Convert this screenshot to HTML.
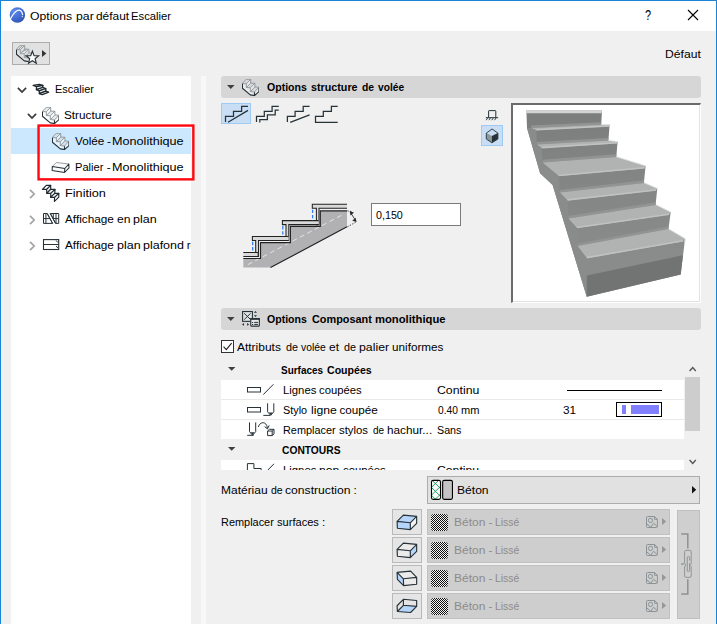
<!DOCTYPE html>
<html lang="fr"><head><meta charset="utf-8"><title>Options par défaut Escalier</title>
<style>
*{box-sizing:border-box;margin:0;padding:0}
html,body{width:717px;height:624px;overflow:hidden;background:#f0f0f0}
body{position:relative;font-family:"Liberation Sans",sans-serif;font-size:12px;color:#000}
.abs{position:absolute}
svg{position:absolute;overflow:visible}
.t{position:absolute;white-space:nowrap;line-height:14px;font-size:11.7px;transform-origin:0 0}
.b{font-weight:bold}
.t span{position:absolute;top:0;left:0;transform-origin:0 0;white-space:nowrap}
#frame{position:absolute;left:0;top:0;width:717px;height:625px;border:1px solid #1883d7;pointer-events:none;z-index:50}
#titlebar{position:absolute;left:1px;top:1px;width:715px;height:30px;background:#fff}
#tree{position:absolute;left:11px;top:76px;width:180px;height:548px;background:#fff;overflow:hidden}
#split{position:absolute;left:201px;top:76px;width:5px;height:548px;background:#f8f8f8}
.hdr{position:absolute;left:221px;width:480px;height:22px;background:#d6d6d6;border-radius:3px}
.sel{position:absolute;background:#c9def5;border:1px solid #9ecbf3}
.btn{position:absolute;background:#e1e1e1;border:1px solid #adadad}
.sbtn{position:absolute;left:392px;width:30px;height:26px;background:#e5e5e5;border:1px solid #b9b9b9}
.gbtn{position:absolute;left:427px;width:243px;height:26px;background:#cecece;border:1px solid #c1c1c1}
.chk{position:absolute;left:431px;width:17px;height:17px;border-radius:3px;background:#808080;
 background-image:repeating-conic-gradient(#111 0 25%,#f4f4f4 0 50%);background-size:2px 2px}
.row{position:absolute;left:0;width:464px;background:#fff}
.sep{position:absolute;left:0;width:464px;height:1px;background:#e9e9e9}
</style></head><body>
<svg width="0" height="0" style="display:none">
 <defs>
  <symbol id="st3d" viewBox="0 0 17 17">
   <path d="M0.2 4.6L4.2 0.3H8.7V4.1L12.9 4.25V7.9L16.85 8.25L17 12.6L12.5 16.6L8.3 15.85L0.2 9.3Z" fill="#ffffff" fill-opacity="0.55"/>
   <path d="M0.2 4.6L4.2 0.3H8.7L4.35 4.8Z M4.35 8.6L8.7 4.1L12.9 4.25L8.3 8.8Z M8.3 12.6L12.9 7.9L16.85 8.25L12.5 12.95Z" fill="#6f7b80" fill-opacity="0.16"/>
   <path d="M0.2 4.6L4.2 0.3H8.7V4.1L12.9 4.25V7.9L16.85 8.25 M0.2 4.6L4.35 4.8V8.6L8.3 8.8V12.6L12.5 12.95 M4.35 4.8L8.7 0.3 M4.35 8.6L8.7 4.1 M8.3 8.8L12.9 4.25 M8.3 12.6L12.9 7.9 M12.5 12.95L16.85 8.25" fill="none" stroke="#858d91" stroke-width="0.85"/>
   <path d="M0.45 4.7V9.3L8.3 15.85L12.5 16.6L17 12.6V8.8 M12.5 13.2V16.6" fill="none" stroke="#263238" stroke-width="1.15" stroke-linejoin="round"/>
  </symbol>
  <symbol id="st3dl" viewBox="0 0 17 17">
   <path d="M0.2 4.6L4.2 0.3H8.7V4.1L12.9 4.25V7.9L16.85 8.25 M0.2 4.6L4.35 4.8V8.6L8.3 8.8V12.6L12.5 12.95 M4.35 4.8L8.7 0.3 M4.35 8.6L8.7 4.1 M8.3 8.8L12.9 4.25 M8.3 12.6L12.9 7.9 M12.5 12.95L16.85 8.25 M2.3 4.7L6.4 0.4 M6.3 6.7L10.8 4.2" fill="none" stroke="#8f979a" stroke-width="0.9"/>
   <path d="M0.45 4.7V9.3L8.3 15.85L12.5 16.6" fill="none" stroke="#263238" stroke-width="1.15" stroke-linejoin="round"/>
  </symbol>
  <symbol id="chevd" viewBox="0 0 10 7"><path d="M0.9 0.9L5 5L9.1 0.9" fill="none" stroke="#3c3c3c" stroke-width="1.75"/></symbol>
  <symbol id="chevr" viewBox="0 0 7 10"><path d="M1 0.9L5.2 5L1 9.1" fill="none" stroke="#a3a3a3" stroke-width="1.7"/></symbol>
  <symbol id="pic" viewBox="0 0 12 12">
   <path d="M1.6 0.5H8.6L11.4 3.3V10.4Q11.4 11.5 10.3 11.5H1.6Q0.5 11.5 0.5 10.4V1.6Q0.5 0.5 1.6 0.5Z M8.6 0.5V3.3H11.4" fill="none" stroke="#8c9396" stroke-width="1"/>
   <circle cx="4.5" cy="4.4" r="2.1" fill="none" stroke="#8c9396" stroke-width="1"/>
   <path d="M0.5 7.7L4.8 11.2L7.6 7.3L11.4 10.6" fill="none" stroke="#8c9396" stroke-width="1"/>
  </symbol>
  <symbol id="pen" viewBox="0 0 11 13">
   <path d="M4.5 0.3V8.5L7.4 12L10.3 8.5V0.3" fill="none" stroke="#263238" stroke-width="1"/>
   <path d="M5.6 9.5H9.2L7.4 12Z" fill="#263238"/>
   <path d="M0.2 12H7" stroke="#263238" stroke-width="1" fill="none"/>
  </symbol>
 </defs>
</svg>

<div id="titlebar"></div>
<!-- app logo -->
<svg style="left:9px;top:7px" width="17" height="17" viewBox="9 7 17 17">
 <defs><radialGradient id="lg" cx="0.3" cy="0.25" r="0.9"><stop offset="0" stop-color="#5f8bec"/><stop offset="0.6" stop-color="#3f68cc"/><stop offset="1" stop-color="#2a4ea8"/></radialGradient></defs>
 <circle cx="17.4" cy="15.05" r="7.7" fill="url(#lg)"/>
 <path d="M10.3 19.3C12 16 14.5 12.2 17.3 10.6C19.8 9.2 22 11 22.6 14.6" fill="none" stroke="#fff" stroke-width="1.2" stroke-linecap="round"/>
 <path d="M21.5 16L23.2 16.2L22.3 17.6Z" fill="#fff"/>
</svg>
<div class="t" style="left:645.2px;top:8px;font-size:14px;top:8px;transform:scaleX(.78)">?</div>
<svg style="left:687px;top:9px" width="12" height="12"><path d="M1 1L11 11M11 1L1 11" stroke="#000" stroke-width="1.1" fill="none"/></svg>

<!-- favourites button -->
<div class="btn" style="left:12px;top:42px;width:38px;height:23px"></div>
<svg style="left:16px;top:45px" width="17" height="17"><use href="#st3dl"/></svg>
<svg style="left:25px;top:50px" width="15" height="15" viewBox="25 50 15 15">
 <path d="M32.4 51.2L34.1 55.6L38.6 55.8L35.1 58.7L36.3 63.2L32.4 60.7L28.5 63.2L29.7 58.7L26.2 55.8L30.7 55.6Z" fill="#fff" stroke="#263238" stroke-width="1.15" stroke-linejoin="miter"/>
</svg>
<svg style="left:42px;top:50px" width="5" height="7"><path d="M0 0L4.3 3.5L0 7Z" fill="#333"/></svg>

<!-- tree -->
<div id="tree">
 <div class="abs" style="left:0;top:52px;width:180px;height:26px;background:#cce8ff"></div>
</div>
<svg style="left:17.1px;top:86.9px" width="10" height="7"><use href="#chevd"/></svg>
<svg style="left:27.1px;top:112.9px" width="10" height="7"><use href="#chevd"/></svg>
<svg style="left:29.1px;top:189.0px" width="7" height="10"><use href="#chevr"/></svg>
<svg style="left:29.1px;top:215.0px" width="7" height="10"><use href="#chevr"/></svg>
<svg style="left:29.1px;top:241.0px" width="7" height="10"><use href="#chevr"/></svg>
<!-- escalier icon -->
<svg style="left:32px;top:83px" width="18" height="13" viewBox="32 83 18 13">
 <g fill="#eef0f1" stroke="#1f2a30" stroke-width="1.25" stroke-linejoin="round">
  <path d="M33.1 85.4L39.4 84.4L42.9 85.4L36.5 86.7Z"/>
  <path d="M36.5 86.7L36.4 89.6L42.7 88.3L42.9 85.4Z"/>
  <path d="M36.4 89.6L39.3 90.9L45.8 88.5L42.7 87.3Z"/>
  <path d="M39.3 90.9V93.6L45.8 91.2V88.5Z"/>
  <path d="M39.3 93.6L42.3 94.7L48.7 92.2L45.8 91.2Z"/>
 </g>
</svg>
<svg style="left:42px;top:107px" width="17" height="17"><use href="#st3d"/></svg>
<svg style="left:52px;top:133px" width="17" height="17"><use href="#st3d"/></svg>
<!-- palier icon -->
<svg style="left:51px;top:161px" width="20" height="13" viewBox="51 161 20 13">
 <path d="M52.3 166.5L56.3 162.5L68.8 164L69 167.8L64.5 172.5L52.1 170.5Z" fill="#fafafa"/>
 <path d="M52.3 166.5L56.3 162.5L68.8 164" fill="none" stroke="#8d9599" stroke-width="0.9"/>
 <path d="M52.3 166.5L64.8 168.5L68.8 164L69 167.8L64.5 172.5L52.1 170.5Z M64.8 168.5L64.5 172.5" fill="none" stroke="#263238" stroke-width="1.05" stroke-linejoin="round"/>
</svg>
<!-- finition icon -->
<svg style="left:41px;top:184px" width="19" height="19" viewBox="41 184 19 19">
 <g fill="#fff" stroke="#1f2a30" stroke-width="1.15" stroke-linejoin="round">
  <path d="M42.4 189.3L46.3 185.4H50.7L46.7 189.3Z"/>
  <path d="M46.7 189.3L50.7 185.4V189.2L46.7 193.3Z"/>
  <path d="M46.7 193.3L50.7 189.3H55L50.8 193.3Z"/>
  <path d="M50.8 193.3L55 189.3L54.8 193.3L50.6 197.3Z"/>
  <path d="M50.6 197.3L54.8 193.4H58.8L54.6 197.3Z"/>
  <path d="M54.6 197.3L58.8 193.4V197.2L54.4 201.3Z"/>
 </g>
</svg>
<!-- plan icon -->
<svg style="left:43px;top:213px" width="17" height="11" viewBox="43 213 17 11">
 <path d="M43.5 213.5H47.2L52.6 223.4H43.5Z M50.3 213.5H58.7V223.4H55.6Z" fill="#fff" stroke="#263238" stroke-width="1"/>
 <path d="M43.5 218.6H50 M52.8 218.6H58.7 M45.9 213.5V223.4 M53.3 213.5V218.6 M56 213.5V223.4 M47.2 213.5L52.6 223.4 M50.3 213.5L55.6 223.4" fill="none" stroke="#263238" stroke-width="1"/>
</svg>
<!-- plafond icon -->
<svg style="left:43px;top:239px" width="17" height="11" viewBox="43 239 17 11">
 <rect x="43.5" y="239.6" width="15.2" height="9.9" fill="#fff" stroke="#263238" stroke-width="1.1"/>
 <path d="M43.5 244.5H58.7 M56.2 240.5L57.8 242.5 M56.2 246L57.8 248" fill="none" stroke="#263238" stroke-width="1"/>
</svg>
<svg style="left:36px;top:123px" width="160" height="59" viewBox="36 123 160 59"><rect x="38.55" y="125.55" width="154.8" height="53.8" fill="none" stroke="#fd0810" stroke-width="2.4"/></svg>
<div id="split"></div>

<!-- panel 1 -->
<div class="hdr" style="top:76px"></div>
<svg style="left:226.8px;top:85px" width="8" height="4"><path d="M0 0H7.6L3.8 3.9Z" fill="#404040"/></svg>
<svg style="left:242px;top:79px" width="17" height="17"><use href="#st3d"/></svg>
<div class="sel" style="left:221px;top:103px;width:30px;height:21px"></div>
<svg style="left:221px;top:103px" width="120" height="22" viewBox="221 103 120 22">
 <g fill="none" stroke="#263238" stroke-width="1.25">
  <path d="M225.5 122V116.4H233.5V111.3H241.6V106.4H248 M228 122.3L248 110.4"/>
  <path d="M256.5 122V116.4H264.3V111.3H272.1V106.4H278.8 M259.8 122.6V119.6H267.4V114.9H275.2V110H278.8"/>
  <path d="M287.4 122V116.4H295.1V111.3H303.2V106.4H309.6 M290.2 122.3L309.6 114.8"/>
  <path d="M337.7 122.3H315.5V116.4H323.3V111.3H331.4V106.4H337.7"/>
 </g>
</svg>
<!-- ground / cube icons -->
<svg style="left:485px;top:109px" width="14" height="12" viewBox="485 109 14 12">
 <path d="M488.6 117.6V111.1Q488.6 110.6 489.1 110.6H495.3Q495.8 110.6 495.8 111.1V117.6 M485.8 117.7H498.2" fill="none" stroke="#263238" stroke-width="1"/>
 <path d="M487.6 118L486.2 120.2 M490.4 118L489 120.2 M493.2 118L491.8 120.2 M496 118L494.6 120.2" fill="none" stroke="#263238" stroke-width="0.9"/>
</svg>
<div class="sel" style="left:481px;top:125px;width:22px;height:21px"></div>
<svg style="left:485px;top:128px" width="14" height="16" viewBox="485 128 14 16">
 <path d="M492.1 129L497.9 133.1L491.9 135.9L486.3 133.1Z" fill="#c5dcf0"/>
 <path d="M486.3 133.1L491.9 135.9V142.8L486.3 139Z" fill="#8c979c"/>
 <path d="M497.9 133.1L491.9 135.9V142.8L497.9 139Z" fill="#263238"/>
 <path d="M492.1 129L497.9 133.1V139L491.9 142.8L486.3 139V133.1Z" fill="none" stroke="#263238" stroke-width="0.9" stroke-linejoin="round"/>
</svg>
<!-- preview frame -->
<div class="abs" style="left:511px;top:103px;width:190px;height:200px;background:#fff;border-top:2px solid #6b6b6b;border-left:2px solid #6b6b6b;border-right:1px solid #fff;border-bottom:1px solid #fff;box-shadow:inset -1px -1px 0 #e3e3e3"></div>
<svg style="left:513px;top:105px" width="186" height="196" viewBox="513 105 186 196">
 <defs><linearGradient id="sg" gradientUnits="userSpaceOnUse" x1="0" y1="110" x2="0" y2="260"><stop offset="0" stop-color="#7b7d7c"/><stop offset="0.35" stop-color="#828483"/><stop offset="1" stop-color="#8a8c8b"/></linearGradient></defs>
 <path d="M526.4 110.5H602L601.2 124.8H609.6L608.4 140.7L617.6 141.7L616.3 156.8L645.6 166L643.9 182.7L657.3 188.6L655.6 204.6L670.7 212.2L668.5 228.8L685.1 238.8L680.7 274.5L586.7 296.7L552.6 185L540.1 173.3L527 128.1Z" fill="url(#sg)"/>
 <path d="M531.4 128.1L601.2 124.8L601.2 122.2L531.2 125.5ZM536.8 144.5L608.4 140.5L608.4 137.9L536.6 141.9ZM542.6 162.4L616.3 156.9L616.3 154.3L542.4 159.8ZM559.9 192.5L644.0 182.9L644.0 180.3L559.7 189.9ZM568.5 218.5L655.8 204.9L655.8 202.3L568.3 215.9ZM577.7 246.1L668.6 229.1L668.6 226.5L577.5 243.5Z" fill="#929493"/>
 <path d="M527 128.1L531.4 128.1L536.4 130.1L536.8 144.5L541.8 147.9L542.6 162.4L558.8 175.8L559.9 192.5L567.7 200.1L568.5 218.5L576.9 227.7L577.7 246.1L586.9 257.8L586.7 296.7L552.6 185L540.1 173.3Z" fill="#8a8c8b"/>
 <path d="M586.9 275.4L682.9 255.2L680.7 274.5L586.7 296.7Z" fill="#727473"/>
 <path d="M526.4 110.3H602L601.6 113.2H526.4Z" fill="#d3d5d5"/>
 <path d="M531.4 128.1L601.2 124.8L609.6 124.8L609.0 126.6L536.4 130.3ZM536.8 144.5L608.4 140.5L617.6 141.7L616.8 143.4L541.8 148.1ZM542.6 162.4L616.3 156.9L645.6 166.0L644.5 168.4L558.8 176.0ZM559.9 192.5L644.0 182.9L657.3 188.6L656.0 190.6L567.7 200.4ZM568.5 218.5L655.8 204.9L670.7 212.2L669.0 214.8L576.9 228.0ZM577.7 246.1L668.6 229.1L685.1 238.8L683.0 241.4L586.9 258.1Z" fill="#b0b3b2"/>
 <path d="M536.4 129.8L609.0 126.0M541.8 147.6L616.8 142.8M558.8 175.5L644.5 167.8M567.7 199.9L656.0 190.0M576.9 227.5L669.0 214.2M586.9 257.6L683.0 240.8" fill="none" stroke="#bfc2c1" stroke-width="1.6"/>
 <g fill="none" stroke="#e2e4e4" stroke-width="1">
  <path d="M601.2 124.5L609.8 124.7 M608.4 140.4L617.8 141.6 M616.3 156.7L645.8 165.9 M644 182.7L657.5 188.5 M655.8 204.7L670.9 212.1 M668.6 228.9L685.3 238.7L684.8 243"/>
 </g>
</svg>
<svg style="left:240px;top:200px" width="120" height="72" viewBox="240 200 120 72">
 <path d="M243.3 258.5H260.5V242.6H290.4V226.3H320.3V210.9H347V226.8L270.5 267.6H243.3Z" fill="#b1b1b4"/>
 <path d="M247.8 264.7L343 214.5" stroke="#e4e4e4" stroke-width="1" stroke-dasharray="5 3.4" fill="none"/>
 <g fill="#d9d9d9" stroke="#222" stroke-width="1.05">
  <path d="M347 204.3H312.3V208.3H316.4V224.6H319V208.3H347"/>
  <path d="M318.6 220.6H282.4V224.6H286V240.4H288.8V224.6H318.6"/>
  <path d="M288.6 236.4H252.4V240.4H255.7V256.4H258.5V240.4H288.6"/>
  <path d="M243.3 252.4H258.2V256.4H243.3"/>
 </g>
 <path d="M243.3 258.5H260.5V242.6H290.4V226.3H320.3V210.9H347 M347 226.8L270.5 267.6" fill="none" stroke="#222" stroke-width="1.15"/>
 <path d="M252.7 241.8V251.8 M282.8 226V236.2 M312.6 209.7V220.2" stroke="#2f7cf6" stroke-width="1.25" stroke-dasharray="3.4 1.8" fill="none"/>
 <path d="M347.4 210.9L352 211.6 M347.4 226.8L356.6 221.7" stroke="#444" stroke-width="1" stroke-dasharray="1.4 1.3" fill="none"/>
 <path d="M351 213.4L355.2 219.8" stroke="#333" stroke-width="0.9" fill="none"/>
 <path d="M349.6 211.3L354 212.4L350.6 215.4Z M356.6 222L352.2 220.8L355.6 217.8Z" fill="#2b2b2b"/>
</svg>
<div class="abs" style="left:371px;top:203px;width:90px;height:23px;background:#fff;border:1px solid #7a7a7a"></div>

<!-- panel 2 -->
<div class="hdr" style="top:308px"></div>
<svg style="left:226.8px;top:317px" width="8" height="4"><path d="M0 0H7.6L3.8 3.9Z" fill="#404040"/></svg>
<svg style="left:241px;top:310px" width="20" height="18" viewBox="241 310 20 18">
 <rect x="242.6" y="311.55" width="9.8" height="9.8" fill="#e2e2e2" stroke="#263238" stroke-width="1.1"/>
 <path d="M244.2 313.3L250.6 319.6 M250.6 313.3L244.2 319.6" fill="none" stroke="#263238" stroke-width="1"/>
 <rect x="250.75" y="318.65" width="8.6" height="7.5" rx="0.6" fill="#e6e6e6" stroke="#263238" stroke-width="1.1"/>
 <rect x="250.2" y="318.1" width="9.7" height="1.7" fill="#263238"/>
 <path d="M254.2 322.4H257.9 M254.2 324.4H257.9" fill="none" stroke="#263238" stroke-width="1"/>
 <path d="M252 321.9H253.1V323H252Z M252 323.9H253.1V325H252Z" fill="#263238"/>
 <path d="M253.9 312.8H257L255.45 310.9Z M253.9 315.2H257L255.45 317.1Z" fill="#263238"/>
 <path d="M244 323.1V325.8L242 324.45Z M247.1 323.1V325.8L249.1 324.45Z" fill="#263238"/>
</svg>
<div class="abs" style="left:221px;top:340px;width:13px;height:13px;background:#fff;border:1px solid #333"></div>
<svg style="left:221px;top:340px" width="13" height="13"><path d="M2.5 6.6L5.3 9.6L10.6 3.2" fill="none" stroke="#222" stroke-width="1.1"/></svg>

<div class="abs" id="list" style="left:221px;top:360px;width:463px;height:110px;overflow:hidden">
 <div class="row" style="top:20px;height:59px"></div>
 <div class="sep" style="top:39px"></div><div class="sep" style="top:59px"></div>
 <div class="row" style="top:100px;height:10px"></div>
</div>
<svg style="left:227.8px;top:367.3px" width="8" height="4"><path d="M0 0H7.4L3.7 3.8Z" fill="#404040"/></svg>
<svg style="left:227.8px;top:447.3px" width="8" height="4"><path d="M0 0H7.4L3.7 3.8Z" fill="#404040"/></svg>
<svg style="left:246px;top:382px" width="30" height="90" viewBox="246 382 30 90">
 <g fill="none" stroke="#263238" stroke-width="1">
  <rect x="247.5" y="387.5" width="13" height="4.5"/>
  <path d="M263.3 394.6L273.4 384.3"/>
  <rect x="247.5" y="407.5" width="13" height="4.5"/>
  <path d="M263.3 415.4H270 M267.6 403.3V411.8L270.7 415.4L273.8 411.8V403.3"/>
  <path d="M247.2 435.3H253.6 M249.5 422.4V431.6L252.6 435.3L255.7 431.6V422.4"/>
  <path d="M258.4 427C259.2 423.6 262.2 421.8 264.8 423.2C266.4 424.2 267.2 426 267.4 428.4 M264.6 426.6L267.5 428.8L269.2 425.4"/>
  <path d="M267.6 431H272.2V435.6H267.6Z M267.6 431L269.4 429.3H274L272.2 431 M274 429.3V433.9L272.2 435.6"/>
 </g>
 <path d="M268.9 412.4H272.5L270.7 415.2Z M250.8 432.2H254.4L252.6 435Z" fill="#263238"/>
</svg>
<svg style="left:246px;top:462px" width="30" height="8" viewBox="246 462 30 8"><g fill="none" stroke="#263238" stroke-width="1"><path d="M247.4 470V463.6H253.9V468.5H261.1V470 M267.9 470L274 463.8"/></g></svg>
<div class="abs" style="left:566.5px;top:390px;width:95px;height:1px;background:#000"></div>
<div class="abs" style="left:616px;top:402px;width:46px;height:15px;background:#fff;border:1px solid #000"></div>
<div class="abs" style="left:622px;top:405px;width:4px;height:9px;background:#8080ff"></div>
<div class="abs" style="left:631px;top:405px;width:28px;height:9px;background:#8080ff"></div>
<!-- scrollbar -->
<div class="abs" style="left:685px;top:377px;width:15px;height:54px;background:#cdcdcd"></div>
<svg style="left:689px;top:366px" width="8" height="6"><path d="M0.6 5L3.7 1.6L6.8 5" fill="none" stroke="#555" stroke-width="1.4"/></svg>
<svg style="left:689px;top:459px" width="8" height="6"><path d="M0.6 1L3.7 4.4L6.8 1" fill="none" stroke="#555" stroke-width="1.4"/></svg>

<!-- bottom -->
<div class="btn" style="left:427px;top:476px;width:273px;height:28px"></div>
<svg style="left:430px;top:479px" width="24" height="22" viewBox="430 479 24 22">
 <defs><clipPath id="gc"><rect x="431.5" y="480.4" width="9" height="19" rx="1.5"/></clipPath></defs>
 <rect x="431.5" y="480.4" width="9" height="19" rx="1.6" fill="#fff"/>
 <path d="M430.0 462.70L442.0 474.26M430.0 473.10L442.0 461.54M430.0 470.50L442.0 482.06M430.0 480.90L442.0 469.34M430.0 478.30L442.0 489.86M430.0 488.70L442.0 477.14M430.0 486.10L442.0 497.66M430.0 496.50L442.0 484.94M430.0 493.90L442.0 505.46M430.0 504.30L442.0 492.74M430.0 501.70L442.0 513.26M430.0 512.10L442.0 500.54" stroke="#16a055" stroke-width="0.95" fill="none" clip-path="url(#gc)"/>
 <rect x="431.5" y="480.4" width="9" height="19" rx="1.6" fill="none" stroke="#000" stroke-width="1.1"/>
 <rect x="442.65" y="480.4" width="9.8" height="19" rx="1.6" fill="#c4c4c4" stroke="#000" stroke-width="1.1"/>
</svg>
<svg style="left:692px;top:486px" width="5" height="8"><path d="M0 0L4.2 3.7L0 7.4Z" fill="#111"/></svg>
<div class="sbtn" style="top:509px"></div>
<svg style="left:397px;top:514px" width="21" height="17" viewBox="0 0 21 17">
 <path d="M0.1 7.4L6.4 1.1L19.65 2.4L13.3 8.8Z" fill="#b5d5fb"/><path d="M0.1 7.4L13.3 8.8V15.6L0.4 14.3Z" fill="#b5d5fb"/><path d="M13.3 8.8L19.65 2.4V9.3L13.3 15.6Z" fill="#f3f3f3"/>
 <path d="M0.1 7.4L6.4 1.1L19.65 2.4V9.3L13.3 15.6L0.4 14.3Z M0.1 7.4L13.3 8.8L19.65 2.4 M13.3 8.8V15.6" fill="none" stroke="#263238" stroke-width="1.15" stroke-linejoin="round"/></svg>
<div class="gbtn" style="top:509px"></div>
<div class="chk" style="top:514px"></div>
<svg style="left:646px;top:516px" width="12" height="12"><use href="#pic"/></svg>
<svg style="left:662px;top:518px" width="5" height="7"><path d="M0 0L4.2 3.5L0 7Z" fill="#979797"/></svg>
<div class="sbtn" style="top:537px"></div>
<svg style="left:397px;top:542px" width="21" height="17" viewBox="0 0 21 17">
 <path d="M0.1 7.4L6.4 1.1L19.65 2.4L13.3 8.8Z" fill="#ebebeb"/><path d="M0.1 7.4L13.3 8.8V15.6L0.4 14.3Z" fill="#ebebeb"/><path d="M13.3 8.8L19.65 2.4V9.3L13.3 15.6Z" fill="#b5d5fb"/>
 <path d="M0.1 7.4L6.4 1.1L19.65 2.4V9.3L13.3 15.6L0.4 14.3Z M0.1 7.4L13.3 8.8L19.65 2.4 M13.3 8.8V15.6" fill="none" stroke="#263238" stroke-width="1.15" stroke-linejoin="round"/></svg>
<div class="gbtn" style="top:537px"></div>
<div class="chk" style="top:542px"></div>
<svg style="left:646px;top:544px" width="12" height="12"><use href="#pic"/></svg>
<svg style="left:662px;top:546px" width="5" height="7"><path d="M0 0L4.2 3.5L0 7Z" fill="#979797"/></svg>
<div class="sbtn" style="top:565px"></div>
<svg style="left:397px;top:570px" width="21" height="17" viewBox="0 0 21 17">
 <path d="M0.1 2.4L13.6 1.1L19.65 7.4L6.4 8.8Z" fill="#ebebeb"/><path d="M0.1 2.4L6.4 8.8L6.6 15.6L0.4 9.3Z" fill="#b5d5fb"/><path d="M6.4 8.8L19.65 7.4V14.3L6.6 15.6Z" fill="#ebebeb"/>
 <path d="M0.1 2.4L13.6 1.1L19.65 7.4V14.3L6.6 15.6L0.4 9.3Z M0.1 2.4L6.4 8.8L19.65 7.4 M6.4 8.8L6.6 15.6" fill="none" stroke="#263238" stroke-width="1.15" stroke-linejoin="round"/></svg>
<div class="gbtn" style="top:565px"></div>
<div class="chk" style="top:570px"></div>
<svg style="left:646px;top:572px" width="12" height="12"><use href="#pic"/></svg>
<svg style="left:662px;top:574px" width="5" height="7"><path d="M0 0L4.2 3.5L0 7Z" fill="#979797"/></svg>
<div class="sbtn" style="top:593px"></div>
<svg style="left:397px;top:598px" width="21" height="17" viewBox="0 0 21 17">
 <path d="M0.4 13.5L6.4 7.3L19.65 8.4L13.6 14.5Z" fill="#b5d5fb"/>
 <path d="M0.1 7.75L6.4 1.3L19.65 2.5V8.4L13.6 14.5L0.4 13.5Z M6.4 1.3V7.3L0.4 13.5 M6.4 7.3L19.65 8.4" fill="none" stroke="#263238" stroke-width="1.15" stroke-linejoin="round"/></svg>
<div class="gbtn" style="top:593px"></div>
<div class="chk" style="top:598px"></div>
<svg style="left:646px;top:600px" width="12" height="12"><use href="#pic"/></svg>
<svg style="left:662px;top:602px" width="5" height="7"><path d="M0 0L4.2 3.5L0 7Z" fill="#979797"/></svg>
<div class="abs" style="left:677px;top:510px;width:23px;height:109px;background:#cfcfcf;border:1px solid #bfbfbf"></div>
<svg style="left:680px;top:532px" width="14" height="64" viewBox="680 532 14 64">
 <g fill="none" stroke="#8d9295">
  <path d="M681.2 534.1H687.8V548.6 M687.8 579.3V593.9H681.2 M681.2 563.9H683.8" stroke-width="1.5"/>
  <path d="M686.2 564.6H685.9Q684.6 564.6 684.6 563.3V551.7Q684.6 550.4 685.9 550.4H689.9Q691.2 550.4 691.2 551.7V563.3Q691.2 564.6 690.4 564.6" stroke-width="0.95"/>
  <path d="M686.2 565.6H685.9Q684.6 565.6 684.6 566.9V576Q684.6 577.3 685.9 577.3H689.9Q691.2 577.3 691.2 576V566.9Q691.2 565.6 690.4 565.6" stroke-width="0.95"/>
  <path d="M687.3 571V557.8Q687.3 556.4 688.45 556.4Q689.6 556.4 689.6 557.8V560.5 M689.6 563V570.2Q689.6 571.6 688.45 571.6Q687.3 571.6 687.3 571" stroke-width="0.95"/>
 </g>
</svg>
<div id="title" class="t" style="left:0;top:9px;"><span style="left:29.96px;transform:translateY(0.3px) scaleX(1.0436)">Options</span> <span style="left:75.65px;transform:translateY(0.3px) scaleX(1.0500)">par</span> <span style="left:96.00px;transform:translateY(0.3px) scaleX(1.0187)">défaut</span> <span style="left:131.34px;transform:translateY(0.3px) scaleX(0.9625)">Escalier</span></div>
<div id="defaut" class="t" style="left:0;top:47px;"><span style="left:665.46px;transform:translateY(0.3px) scaleX(1.0394)">Défaut</span></div>
<div id="t1" class="t" style="left:0;top:82px;"><span style="left:54.56px;transform:translateY(0.3px) scaleX(0.9375)">Escalier</span></div>
<div id="t2" class="t" style="left:0;top:108px;"><span style="left:64.49px;transform:translateY(0.3px) scaleX(1.0065)">Structure</span></div>
<div id="t3" class="t" style="left:0;top:134px;"><span style="left:75.40px;transform:translateY(0.3px) scaleX(1.0034)">Volée</span> <span style="left:106.90px;transform:translateY(0.3px) scaleX(1.0000)">-</span> <span style="left:112.12px;transform:translateY(0.3px) scaleX(1.0800)">Monolithique</span></div>
<div id="t4" class="t" style="left:0;top:160px;"><span style="left:74.65px;transform:translateY(0.3px) scaleX(0.9517)">Palier</span> <span style="left:106.80px;transform:translateY(0.3px) scaleX(1.0000)">-</span> <span style="left:112.12px;transform:translateY(0.3px) scaleX(1.0800)">Monolithique</span></div>
<div id="t5" class="t" style="left:0;top:186px;"><span style="left:64.51px;transform:translateY(0.3px) scaleX(1.0861)">Finition</span></div>
<div id="t6" class="t" style="left:0;top:212px;"><span style="left:65.10px;transform:translateY(0.3px) scaleX(1.0083)">Affichage</span> <span style="left:116.96px;transform:translateY(0.3px) scaleX(1.0364)">en</span> <span style="left:132.93px;transform:translateY(0.3px) scaleX(1.0700)">plan</span></div>
<div id="t7" class="t" style="left:0;top:238px;width:191px;height:14px;overflow:hidden"><span style="left:65.10px;transform:translateY(0.3px) scaleX(1.0083)">Affichage</span> <span style="left:116.93px;transform:translateY(0.3px) scaleX(1.0700)">plan</span> <span style="left:142.73px;transform:translateY(0.3px) scaleX(1.0676)">plafond</span> <span style="left:186.70px;transform:translateY(0.3px) scaleX(1.0000)">réfléchi</span></div>
<div id="l5" class="t" style="left:0;top:463px;width:600px;height:7px;overflow:hidden"><span style="left:282.73px;transform:translateY(0.3px) scaleX(0.9697)">Lignes</span> <span style="left:318.96px;transform:translateY(0.3px) scaleX(1.0389)">non</span> <span style="left:342.63px;transform:translateY(0.3px) scaleX(0.9651)">coupées</span></div>
<div id="l5v" class="t" style="left:0;top:463px;width:600px;height:7px;overflow:hidden"><span style="left:436.76px;transform:translateY(0.3px) scaleX(1.0436)">Continu</span></div>
<div id="h1" class="t b" style="left:0;top:80px;"><span style="left:267.30px;transform:translateY(0.3px) scaleX(0.9023)">Options</span> <span style="left:311.28px;transform:translateY(0.3px) scaleX(0.9184)">structure</span> <span style="left:362.40px;transform:translateY(0.3px) scaleX(0.8846)">de</span> <span style="left:378.10px;transform:translateY(0.3px) scaleX(0.8733)">volée</span></div>
<div id="inp" class="t" style="left:0;top:208px;"><span style="left:375.60px;transform:translateY(0.3px) scaleX(0.9172)">0,150</span></div>
<div id="h2" class="t b" style="left:0;top:312px;"><span style="left:267.30px;transform:translateY(0.3px) scaleX(0.9023)">Options</span> <span style="left:311.50px;transform:translateY(0.3px) scaleX(0.9297)">Composant</span> <span style="left:374.74px;transform:translateY(0.3px) scaleX(0.9625)">monolithique</span></div>
<div id="cb" class="t" style="left:0;top:340px;"><span style="left:237.40px;transform:translateY(0.3px) scaleX(1.0233)">Attributs</span> <span style="left:285.70px;transform:translateY(0.3px) scaleX(0.9231)">de</span> <span style="left:301.30px;transform:translateY(0.3px) scaleX(0.8821)">volée</span> <span style="left:329.18px;transform:translateY(0.3px) scaleX(1.0222)">et</span> <span style="left:344.40px;transform:translateY(0.3px) scaleX(0.9231)">de</span> <span style="left:359.45px;transform:translateY(0.3px) scaleX(1.0519)">palier</span> <span style="left:392.10px;transform:translateY(0.3px) scaleX(1.0000)">uniformes</span></div>
<div id="l0" class="t b" style="left:0;top:363px;"><span style="left:281.20px;transform:translateY(0.3px) scaleX(0.8510)">Surfaces</span> <span style="left:327.40px;transform:translateY(0.3px) scaleX(0.9061)">Coupées</span></div>
<div id="l1" class="t" style="left:0;top:383px;"><span style="left:282.73px;transform:translateY(0.3px) scaleX(0.9697)">Lignes</span> <span style="left:319.03px;transform:translateY(0.3px) scaleX(0.9651)">coupées</span></div>
<div id="l1v" class="t" style="left:0;top:383px;"><span style="left:436.65px;transform:translateY(0.3px) scaleX(1.0513)">Continu</span></div>
<div id="l2" class="t" style="left:0;top:403px;"><span style="left:282.77px;transform:translateY(0.3px) scaleX(0.9280)">Stylo</span> <span style="left:310.66px;transform:translateY(0.3px) scaleX(1.0435)">ligne</span> <span style="left:339.50px;transform:translateY(0.3px) scaleX(1.0000)">coupée</span></div>
<div id="l2v" class="t" style="left:0;top:403px;"><span style="left:437.80px;transform:translateY(0.3px) scaleX(0.8727)">0.40</span> <span style="left:460.66px;transform:translateY(0.3px) scaleX(0.9444)">mm</span></div>
<div id="l2n" class="t" style="left:0;top:403px;"><span style="left:563.29px;transform:translateY(0.3px) scaleX(1.0091)">31</span></div>
<div id="l3" class="t" style="left:0;top:423px;"><span style="left:282.77px;transform:translateY(0.3px) scaleX(0.9309)">Remplacer</span> <span style="left:338.73px;transform:translateY(0.3px) scaleX(0.9690)">stylos</span> <span style="left:372.50px;transform:translateY(0.3px) scaleX(0.8538)">de</span> <span style="left:387.39px;transform:translateY(0.3px) scaleX(1.0070)">hachur...</span></div>
<div id="l3v" class="t" style="left:0;top:423px;"><span style="left:436.78px;transform:translateY(0.3px) scaleX(0.9160)">Sans</span></div>
<div id="l4" class="t b" style="left:0;top:443px;"><span style="left:281.50px;transform:translateY(0.3px) scaleX(0.8773)">CONTOURS</span></div>
<div id="mat" class="t" style="left:0;top:483px;"><span style="left:220.67px;transform:translateY(0.3px) scaleX(1.0250)">Matériau</span> <span style="left:270.80px;transform:translateY(0.3px) scaleX(0.9000)">de</span> <span style="left:285.46px;transform:translateY(0.3px) scaleX(1.0393)">construction</span> <span style="left:353.45px;transform:translateY(0.3px) scaleX(1.0000)">:</span></div>
<div id="rs" class="t" style="left:0;top:515px;"><span style="left:220.77px;transform:translateY(0.3px) scaleX(0.9345)">Remplacer</span> <span style="left:276.75px;transform:translateY(0.3px) scaleX(0.9488)">surfaces</span> <span style="left:321.95px;transform:translateY(0.3px) scaleX(1.0000)">:</span></div>
<div id="bet" class="t" style="left:0;top:483px;"><span style="left:456.67px;transform:translateY(0.3px) scaleX(1.0345)">Béton</span></div>
<div id="b1" class="t" style="left:0;top:515px;color:#8d8b8c"><span style="left:453.77px;transform:translateY(0.3px) scaleX(1.0276)">Béton</span> <span style="left:488.45px;transform:translateY(0.3px) scaleX(1.0000)">-</span> <span style="left:494.92px;transform:translateY(0.3px) scaleX(0.8846)">Lissé</span></div>
<div id="b2" class="t" style="left:0;top:543px;color:#8d8b8c"><span style="left:453.77px;transform:translateY(0.3px) scaleX(1.0276)">Béton</span> <span style="left:488.45px;transform:translateY(0.3px) scaleX(1.0000)">-</span> <span style="left:494.92px;transform:translateY(0.3px) scaleX(0.8846)">Lissé</span></div>
<div id="b3" class="t" style="left:0;top:571px;color:#8d8b8c"><span style="left:453.77px;transform:translateY(0.3px) scaleX(1.0276)">Béton</span> <span style="left:488.45px;transform:translateY(0.3px) scaleX(1.0000)">-</span> <span style="left:494.92px;transform:translateY(0.3px) scaleX(0.8846)">Lissé</span></div>
<div id="b4" class="t" style="left:0;top:599px;color:#8d8b8c"><span style="left:453.77px;transform:translateY(0.3px) scaleX(1.0276)">Béton</span> <span style="left:488.45px;transform:translateY(0.3px) scaleX(1.0000)">-</span> <span style="left:494.92px;transform:translateY(0.3px) scaleX(0.8846)">Lissé</span></div>
<div id="frame"></div>
</body></html>
